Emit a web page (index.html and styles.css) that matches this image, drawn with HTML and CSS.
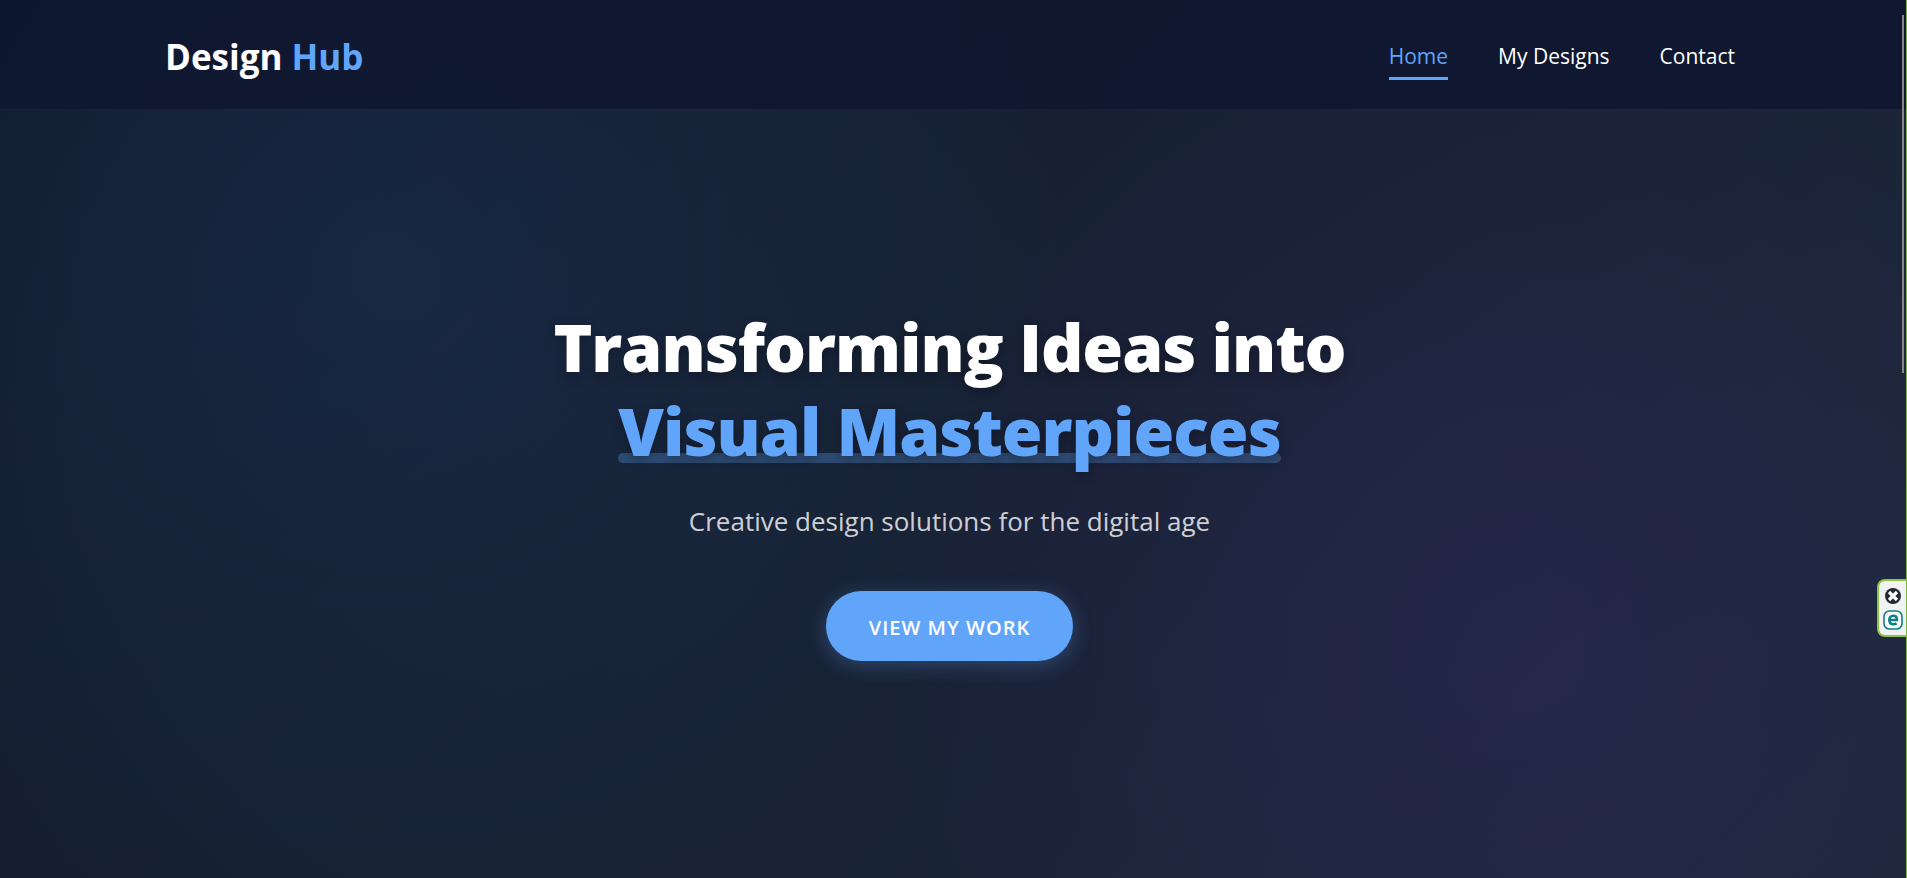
FILE: index.html
```html
<!DOCTYPE html>
<html lang="en">
<head>
<meta charset="utf-8">
<meta name="viewport" content="width=device-width, initial-scale=1">
<title>Design Hub</title>
<link rel="stylesheet" href="styles.css">
</head>
<body>
<div class="page">
  <header class="site-header">
    <div class="header-inner">
      <a class="logo" href="#">Design <span class="accent">Hub</span></a>
      <nav class="nav" aria-label="Main">
        <a class="nav-link active" href="#home">Home</a>
        <a class="nav-link" href="#designs">My Designs</a>
        <a class="nav-link" href="#contact">Contact</a>
      </nav>
    </div>
  </header>
  <main class="hero" id="home">
    <h1 class="title">Transforming Ideas into<br><span class="highlight">Visual Masterpieces</span></h1>
    <p class="subtitle">Creative design solutions for the digital age</p>
    <a class="cta" href="#designs">View My Work</a>
  </main>
</div>
<div class="scroll-thumb"></div>
<aside class="side-widget">
  <button class="widget-button" type="button" aria-label="Close">
    <svg width="16" height="16" viewBox="0 0 16 16"><circle cx="8" cy="8" r="8" fill="#242a35"/><path d="M4 4l8 8M12 4l-8 8" stroke="#fff" stroke-width="3.200"/></svg>
  </button>
  <button class="widget-button" type="button" aria-label="Open extension">
    <svg width="20" height="20" viewBox="0 0 20 20"><rect x="1" y="1" width="18" height="18" rx="5.5" fill="#fff" stroke="#0e8089" stroke-width="1.600"/><path d="M6.500 10h7.500c0-3-1.500-4.300-3.700-4.300C7.900 5.700 6.300 7.400 6.300 10s1.600 4.200 4.200 4.200c1.300 0 2.300-.3 3.100-.8" fill="none" stroke="#0e8089" stroke-width="2.600"/></svg>
  </button>
</aside>
<div class="edge-line"></div>
</body>
</html>
```
FILE: styles.css
```css
* {
  box-sizing: border-box;
}

body {
  margin: 0;
  overflow: hidden;
  color: #fff;
  background: #0f172a;
  font-family: "Open Sans", "Noto Sans", sans-serif;
}

a {
  color: inherit;
  text-decoration: none;
}

.page {
  position: relative;
  z-index: 0;
  display: flex;
  flex-direction: column;
  min-height: 100vh;
  background:
    radial-gradient(circle at 20% 30%, rgba(66, 140, 240, 0.1) 0%, transparent 42%),
    radial-gradient(circle at 80% 74%, rgba(124, 58, 237, 0.1) 0%, transparent 40%),
    linear-gradient(135deg, #10192b 0%, #1e293b 100%);
}

.site-header {
  height: 110px;
  padding: 0 172px 0 165px;
  background: rgba(14, 23, 48, 0.9);
  border-bottom: 1px solid rgba(255, 255, 255, 0.05);
}

.header-inner {
  display: flex;
  align-items: center;
  justify-content: space-between;
  height: 100%;
}

.logo {
  padding-top: 4px;
  font-size: 35px;
  font-weight: 700;
  line-height: 48px;
}

.accent {
  color: #60a5fa;
}

.nav {
  display: flex;
  gap: 50px;
  padding-top: 4px;
}

.nav-link {
  padding: 7px 0 6px;
  border-bottom: 3px solid transparent;
  font-size: 21px;
  line-height: 30px;
}

.nav-link.active {
  color: #60a5fa;
  border-bottom-color: #60a5fa;
}

.hero {
  display: flex;
  flex: 1;
  flex-direction: column;
  align-items: center;
  justify-content: center;
  padding: 0 8px 24px 0;
  text-align: center;
}

.title {
  position: relative;
  z-index: 0;
  margin: 0;
  font-size: 66px;
  font-weight: 800;
  line-height: 84px;
  letter-spacing: -1px;
  text-shadow: 0 4px 12px rgba(0, 0, 0, 0.3);
}

.highlight {
  position: relative;
  display: inline-block;
  color: #60a5fa;
}

.highlight::after {
  position: absolute;
  right: 0;
  bottom: 9px;
  left: 0;
  z-index: -1;
  height: 10px;
  border-radius: 5px;
  background: rgba(96, 165, 250, 0.3);
  content: "";
}

.subtitle {
  margin: 27px 0 48px;
  color: rgba(255, 255, 255, 0.8);
  font-size: 26px;
  line-height: 44px;
}

.cta {
  padding: 22px 43px 18px;
  border-radius: 35px;
  background: #60a5fa;
  box-shadow: 0 4px 20px rgba(96, 165, 250, 0.3);
  font-size: 20px;
  font-weight: 600;
  line-height: 30px;
  letter-spacing: 1px;
  text-transform: uppercase;
}

.scroll-thumb {
  position: fixed;
  top: 15px;
  right: 3px;
  width: 2px;
  height: 358px;
  background: #85868a;
}

.side-widget {
  position: fixed;
  top: 579px;
  right: 0;
  display: flex;
  flex-direction: column;
  align-items: center;
  gap: 6px;
  width: 30px;
  padding: 7px 4px 5px 3px;
  border: 2px solid #8bc53f;
  border-right: 0;
  border-radius: 8px 0 0 8px;
  background: #f2f2f2;
}

.widget-button {
  display: flex;
  padding: 0;
  border: 0;
  background: none;
}

.edge-line {
  position: fixed;
  top: 0;
  right: 0;
  bottom: 0;
  width: 1px;
  background: #7cb83c;
}
```
